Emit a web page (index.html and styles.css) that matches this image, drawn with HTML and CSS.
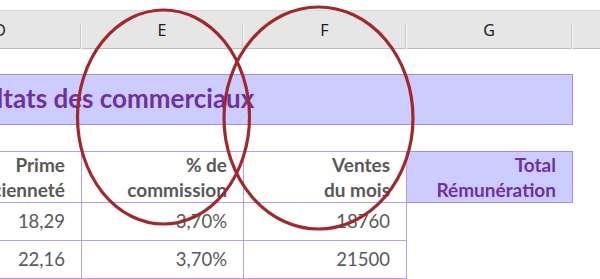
FILE: index.html
```html
<!DOCTYPE html>
<html lang="fr">
<head>
<meta charset="utf-8">
<title>Résultats des commerciaux</title>
<link rel="stylesheet" href="styles.css">
</head>
<body>
<div class="page">
  <div class="topstrip"></div>
  <div class="colheads">
    <div class="ch">D</div>
    <div class="ch">E</div>
    <div class="ch">F</div>
    <div class="ch">G</div>
    <div class="ch"></div>
  </div>
  <div class="sheet">
    <div class="gap1"></div>
    <div class="title-row">
      <div class="title">Résultats des commerciaux</div>
    </div>
    <div class="gap2"></div>
    <div class="row head">
      <div class="cell">Prime<br>ancienneté</div>
      <div class="cell">% de<br>commission</div>
      <div class="cell">Ventes<br>du mois</div>
      <div class="cell total">Total<br>Rémunération</div>
    </div>
    <div class="row data">
      <div class="cell">18,29</div>
      <div class="cell">3,70%</div>
      <div class="cell">18760</div>
      <div class="cell empty"></div>
    </div>
    <div class="row data">
      <div class="cell">22,16</div>
      <div class="cell">3,70%</div>
      <div class="cell">21500</div>
      <div class="cell empty"></div>
    </div>
  </div>
  <svg class="marks" width="600" height="279" viewBox="0 0 600 279" aria-hidden="true">
    <ellipse cx="163.5" cy="117" rx="86" ry="107" fill="none" stroke="#a0292b" stroke-width="3.2"/>
    <ellipse cx="318.5" cy="118" rx="94.5" ry="111" fill="none" stroke="#a0292b" stroke-width="3.2"/>
  </svg>
</div>
</body>
</html>
```
FILE: styles.css
```css
html, body {
  margin: 0;
  padding: 0;
  background: #ffffff;
}

.page {
  position: relative;
  width: 600px;
  height: 279px;
  overflow: hidden;
  background: #ffffff;
}

.topstrip {
  height: 10px;
  background: #ffffff;
}

.colheads {
  display: grid;
  grid-template-columns: 162px 162px 163px 166px 200px;
  margin-left: -81px;
  height: 39px;
  box-sizing: border-box;
  background: #e6e6e6;
  border-top: 1px solid #d8d8d8;
  border-bottom: 1px solid #bcbcbc;
}

.ch {
  position: relative;
  font-family: "Noto Sans", "Open Sans", sans-serif;
  font-size: 16px;
  color: #1e1e1e;
  text-align: center;
  line-height: 37px;
  padding-top: 1px;
}

.ch::after {
  content: "";
  position: absolute;
  right: 0;
  bottom: 0;
  width: 1px;
  height: 25px;
  background: #cdcdcd;
  box-shadow: 1px 0 0 #f4f4f4;
}

.sheet {
  font-family: Lato, "Liberation Sans", sans-serif;
}

.gap1 {
  height: 25px;
}

.title-row {
  display: flex;
}

.title {
  box-sizing: border-box;
  margin-left: -200px;
  width: 773px;
  height: 51px;
  background: #ccccff;
  border: 1px solid #a88bd8;
  color: #7030a0;
  font-weight: 700;
  font-size: 26px;
  line-height: 47px;
  padding-left: 140px;
  white-space: nowrap;
}

.gap2 {
  height: 26px;
}

.row {
  display: grid;
  grid-template-columns: 162px 162px 163px 166px;
  margin-left: -80px;
}

.cell {
  box-sizing: border-box;
  border-right: 1px solid #b79ddc;
  border-bottom: 1px solid #b79ddc;
  text-align: right;
  padding-right: 16px;
  color: #595959;
  font-size: 18.5px;
  white-space: nowrap;
}

.head .cell {
  height: 52px;
  border-top: 1px solid #b79ddc;
  font-weight: 700;
  font-size: 19px;
  line-height: 25px;
}

.head .cell.total {
  background: #ccccff;
  color: #7030a0;
  border-color: #a88bd8;
}

.data .cell {
  height: 38px;
  line-height: 37px;
}

.data .cell.empty {
  border: none;
}

.marks {
  position: absolute;
  left: 0;
  top: 0;
  pointer-events: none;
}
```
